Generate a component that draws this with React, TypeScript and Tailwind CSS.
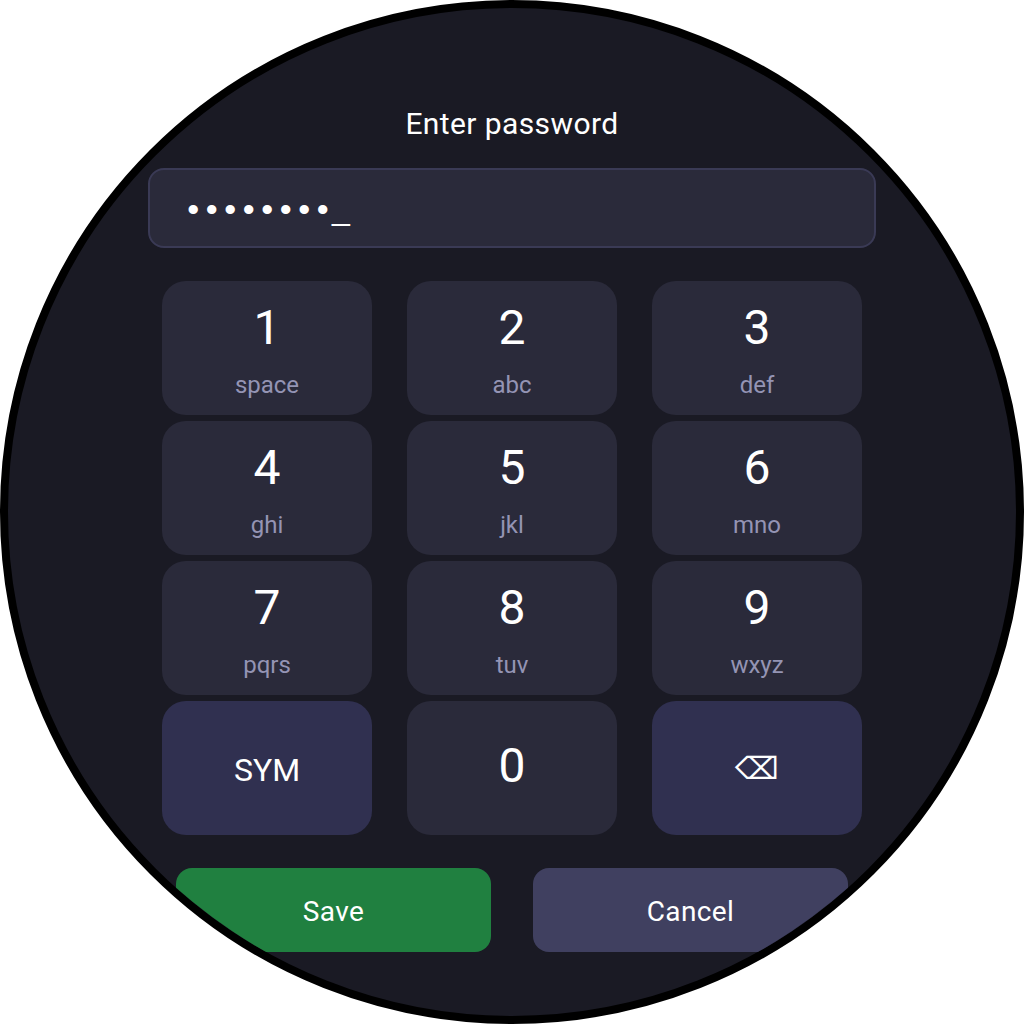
const keys = [
  { digit: '1', sub: 'space' },
  { digit: '2', sub: 'abc' },
  { digit: '3', sub: 'def' },
  { digit: '4', sub: 'ghi' },
  { digit: '5', sub: 'jkl' },
  { digit: '6', sub: 'mno' },
  { digit: '7', sub: 'pqrs' },
  { digit: '8', sub: 'tuv' },
  { digit: '9', sub: 'wxyz' },
];

function DigitKey({ digit, sub }: { digit: string; sub: string }) {
  return (
    <button className="h-[134px] rounded-[24px] bg-[#2a2a3a] flex flex-col items-center">
      <span className="mt-[20px] h-[54px] text-[48px] leading-[54px] text-white">{digit}</span>
      <span className="mt-[16px] text-[24px] leading-[28px] text-[#9494b4]">{sub}</span>
    </button>
  );
}

export default function App() {
  return (
    <div className="w-[1024px] h-[1024px] bg-white font-['Roboto',sans-serif]">
      <div className="w-full h-full rounded-full border-8 border-black bg-[#1a1a24] overflow-hidden flex flex-col items-center">
        <h1 className="mt-[98px] h-[36px] text-[30px] leading-[36px] tracking-[0.4px] font-normal text-white">Enter password</h1>

        {/* password field */}
        <div className="mt-[26px] w-[728px] h-[80px] shrink-0 rounded-[16px] border-2 border-[#3a3a55] bg-[#2a2a3a] pl-[34px] flex items-center text-white font-['Liberation_Sans',sans-serif]">
          {[0, 1, 2, 3, 4, 5, 6, 7].map((i) => (
            <span key={i} className="w-[18.5px] mt-[2px] text-center text-[34px] leading-[40px] overflow-hidden">•</span>
          ))}
          <span className="pt-px text-[32px] leading-[40px]">_</span>
        </div>

        {/* keypad */}
        <div className="mt-[33px] w-[700px] grid grid-cols-3 gap-x-[35px] gap-y-[6px]">
          {keys.map((k) => (
            <DigitKey key={k.digit} digit={k.digit} sub={k.sub} />
          ))}
          <button className="h-[134px] rounded-[24px] bg-[#303050] pt-[3px] text-[32px] text-white">SYM</button>
          <button className="h-[134px] rounded-[24px] bg-[#2a2a3a] pb-[4px] text-[48px] text-white">0</button>
          <button className="h-[134px] rounded-[24px] bg-[#303050] text-[31px] text-white font-['DejaVu_Sans',sans-serif]">⌫</button>
        </div>

        {/* actions */}
        <div className="mt-[33px] flex gap-[42px]">
          <button className="w-[315px] h-[84px] rounded-[16px] bg-[#208040] pt-[4px] text-[28px] tracking-[0.4px] text-white">Save</button>
          <button className="w-[315px] h-[84px] rounded-[16px] bg-[#404060] pt-[4px] text-[28px] tracking-[0.4px] text-white">Cancel</button>
        </div>
      </div>
    </div>
  );
}
